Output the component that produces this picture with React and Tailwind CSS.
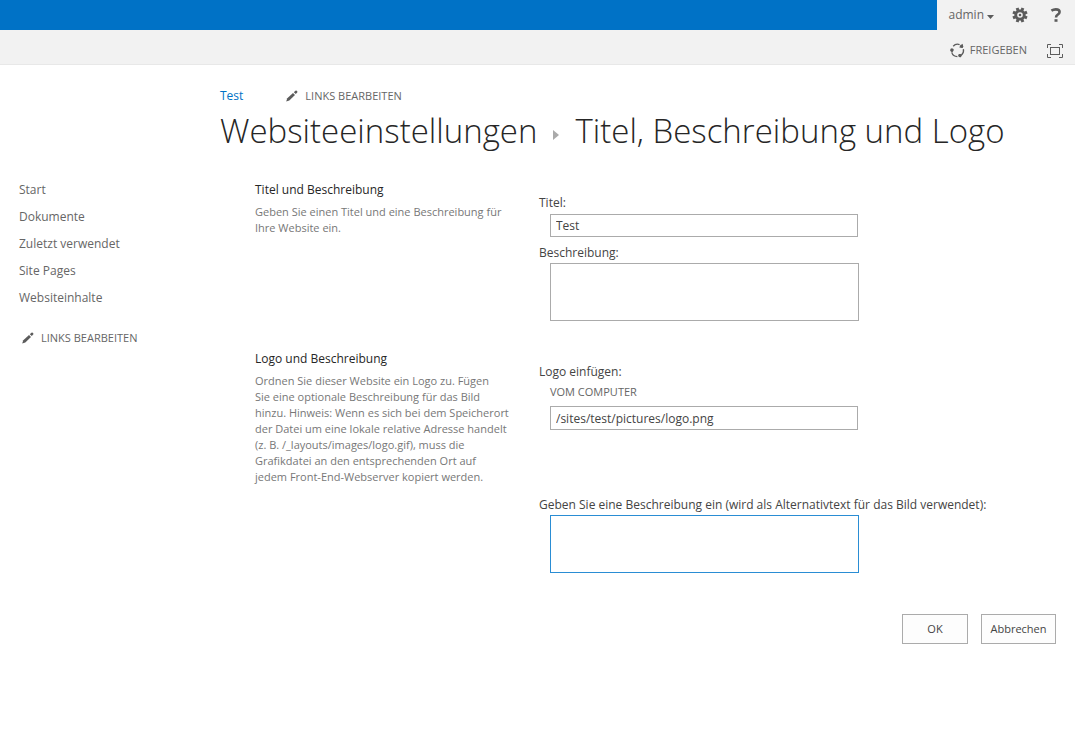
const navItems = [
    "Start",
    "Dokumente",
    "Zuletzt verwendet",
    "Site Pages",
    "Websiteinhalte",
];

const titleHelp = `Geben Sie einen Titel und eine Beschreibung für
Ihre Website ein.`;

const logoHelp = `Ordnen Sie dieser Website ein Logo zu. Fügen
Sie eine optionale Beschreibung für das Bild
hinzu. Hinweis: Wenn es sich bei dem Speicherort
der Datei um eine lokale relative Adresse handelt
(z. B. /_layouts/images/logo.gif), muss die
Grafikdatei an den entsprechenden Ort auf
jedem Front-End-Webserver kopiert werden.`;

const PencilIcon = () => (
    <svg width="12" height="12" viewBox="0 0 12 12" fill="#5c5c5c" aria-hidden="true">
        <path d="M0.2 11.5 1.3 8.3 7 2.9 9 4.9 3.3 10.4z" />
        <path d="M7.8 2.2 9.4.7q.7-.5 1.3 0l.5.5q.6.7 0 1.3L9.8 4.1z" />
    </svg>
);

const GearIcon = () => (
    <svg width="16" height="16" viewBox="0 0 16 16" aria-hidden="true">
        <g fill="#5c5c5c">
            {[0, 45, 90, 135].map((angle) => (
                <rect
                    key={angle}
                    x="6.5"
                    y="0.4"
                    width="3"
                    height="15.2"
                    transform={`rotate(${angle + 22.5} 8 8)`}
                />
            ))}
            <circle cx="8" cy="8" r="5.6" />
        </g>
        <circle cx="8" cy="8" r="2.8" fill="#f2f2f2" />
        <circle cx="8" cy="8" r="1.3" fill="#5c5c5c" />
    </svg>
);

const ShareIcon = () => (
    <svg width="15" height="15" viewBox="0 0 15 15" aria-hidden="true">
        <g fill="none" stroke="#5c5c5c" strokeWidth="1.3">
            <path d="M3.2 3.2A6 6 0 0 1 9.6 1.6" />
            <path d="M13.4 6.2A6 6 0 0 1 11.5 12" />
            <path d="M7.4 13.6A6 6 0 0 1 1.7 9.4" />
        </g>
        <g fill="#5c5c5c">
            <path d="M9 4.2 12.8.8 12.9 5z" />
            <circle cx="11.6" cy="3.2" r="1.6" />
            <circle cx="9.9" cy="12.6" r="1.7" />
            <path d="M8.6 11 12.3 11.4 10.2 14.4z" />
            <circle cx="1.9" cy="7" r="1.7" />
            <path d="M.2 7.4 3.7 6.2 2.4 9.6z" />
        </g>
    </svg>
);

const FocusIcon = () => (
    <svg
        width="16"
        height="14"
        viewBox="0 0 16 14"
        fill="none"
        stroke="#5c5c5c"
        aria-hidden="true"
    >
        <path d="M.5 4V.5H4M12 .5h3.5V4M15.5 10v3.5H12M4 13.5H.5V10" />
        <rect x="3.5" y="3.5" width="9" height="7" />
    </svg>
);

const HelpIcon = () => (
    <svg
        width="14"
        height="14"
        viewBox="0 0 14 14"
        fill="none"
        stroke="#5c5c5c"
        strokeWidth="2.6"
        aria-hidden="true"
    >
        <path d="M2.4 2.7Q4.4 1.4 6.8 1.4 10.6 1.4 10.6 4q0 1.5-1.9 2.6Q7 7.5 7 9.6" />
        <path d="M5.5 12.5h3" />
    </svg>
);

const EditLinks = () => (
    <button type="button" className="flex items-center gap-[7px] text-[11px] leading-4 text-[#666]">
        <PencilIcon />
        <span>LINKS BEARBEITEN</span>
    </button>
);

const Section = ({ title, description, children }) => (
    <section className="flex">
        <div className="w-[284px] shrink-0">
            <h2 className="text-xs leading-5 text-[#262626]">{title}</h2>
            <p className="mt-1 text-[11px] leading-4 whitespace-pre-line text-[#777]">
                {description}
            </p>
        </div>
        <div className="min-w-0 flex-1 pt-[13px] text-[#444]">{children}</div>
    </section>
);

const App = () => {
    return (
        <div className="bg-white font-['Open_Sans','Noto_Sans',sans-serif] text-xs text-[#444]">
            <header>
                <div className="flex h-[30px] justify-end bg-[#0072c6]">
                    <div className="flex items-center bg-[#f2f2f2] pr-3 pl-[11px] text-[#666]">
                        <button type="button" className="flex items-center gap-[3px]">
                            admin
                            <svg
                                width="7"
                                height="4"
                                viewBox="0 0 7 4"
                                fill="#5c5c5c"
                                className="mt-1"
                                aria-hidden="true"
                            >
                                <path d="M0 0h7L3.5 4z" />
                            </svg>
                        </button>
                        <button type="button" className="ml-[18px]" aria-label="Einstellungen">
                            <GearIcon />
                        </button>
                        <button type="button" className="ml-[21px]" aria-label="Hilfe">
                            <HelpIcon />
                        </button>
                    </div>
                </div>
                <div className="flex h-[35px] items-center justify-end border-b border-[#e8e8e8] bg-[#f2f2f2] pt-[7px] pr-3 text-[#666]">
                    <button type="button" className="flex items-center gap-[5px] text-[11px]">
                        <ShareIcon />
                        <span>FREIGEBEN</span>
                    </button>
                    <button type="button" className="ml-5" aria-label="Fokus auf Inhalt">
                        <FocusIcon />
                    </button>
                </div>
            </header>

            <div className="pt-[23px] pl-[220px]">
                <nav className="flex items-center gap-[43px]">
                    <a href="#test" className="leading-4 text-[#0072c6]">
                        Test
                    </a>
                    <EditLinks />
                </nav>
                <h1 className="flex items-center text-[33px] leading-[54px] font-light whitespace-nowrap text-[#262626]">
                    <a href="#einstellungen">Websiteeinstellungen</a>
                    <svg
                        width="6"
                        height="10"
                        viewBox="0 0 6 10"
                        fill="#aaa"
                        className="mx-4 mt-2"
                        aria-hidden="true"
                    >
                        <path d="M0 0 6 5 0 10z" />
                    </svg>
                    <span>Titel, Beschreibung und Logo</span>
                </h1>
            </div>

            <div className="flex pt-[22px] pr-[19px]">
                <nav className="w-[255px] shrink-0 pl-[19px]">
                    <ul>
                        {navItems.map((item) => (
                            <li key={item} className="mb-[7px] leading-5 text-[#666]">
                                <a href="#nav">{item}</a>
                            </li>
                        ))}
                    </ul>
                    <div className="mt-[22px] pl-[3px]">
                        <EditLinks />
                    </div>
                </nav>

                <form className="min-w-0 flex-1" onSubmit={(e) => e.preventDefault()}>
                    <Section title="Titel und Beschreibung" description={titleHelp}>
                        <label htmlFor="title" className="block leading-5">
                            Titel:
                        </label>
                        <div className="mt-px pl-[11px]">
                            <input
                                id="title"
                                type="text"
                                defaultValue="Test"
                                className="block h-[23px] w-[308px] border border-[#ababab] px-[5px]"
                            />
                        </div>
                        <label htmlFor="description" className="mt-[6px] block leading-5">
                            Beschreibung:
                        </label>
                        <div className="pl-[11px]">
                            <textarea
                                id="description"
                                className="block h-[58px] w-[309px] resize-none border border-[#ababab] px-[5px]"
                            />
                        </div>
                    </Section>

                    <div className="mt-7">
                        <Section title="Logo und Beschreibung" description={logoHelp}>
                            <label htmlFor="logo" className="block leading-5">
                                Logo einfügen:
                            </label>
                            <div className="pl-[11px]">
                                <button type="button" className="block text-[11px] leading-5 text-[#666]">
                                    VOM COMPUTER
                                </button>
                                <input
                                    id="logo"
                                    type="text"
                                    defaultValue="/sites/test/pictures/logo.png"
                                    className="mt-1 block h-6 w-[308px] border border-[#ababab] px-[5px]"
                                />
                            </div>
                            <label htmlFor="alt" className="mt-[65px] block leading-5 whitespace-nowrap">
                                Geben Sie eine Beschreibung ein (wird als Alternativtext für das Bild verwendet):
                            </label>
                            <div className="pl-[11px]">
                                <textarea
                                    id="alt"
                                    className="block h-[58px] w-[309px] resize-none border border-[#2a8dd4] px-[5px]"
                                />
                            </div>
                        </Section>
                    </div>

                    <div className="mt-[41px] flex justify-end gap-[13px] text-[11px]">
                        <button type="submit" className="h-[30px] w-[66px] border border-[#ababab] bg-[#fdfdfd]">
                            OK
                        </button>
                        <button type="button" className="h-[30px] w-[75px] border border-[#ababab] bg-[#fdfdfd]">
                            Abbrechen
                        </button>
                    </div>
                </form>
            </div>
        </div>
    );
};

export default App;
